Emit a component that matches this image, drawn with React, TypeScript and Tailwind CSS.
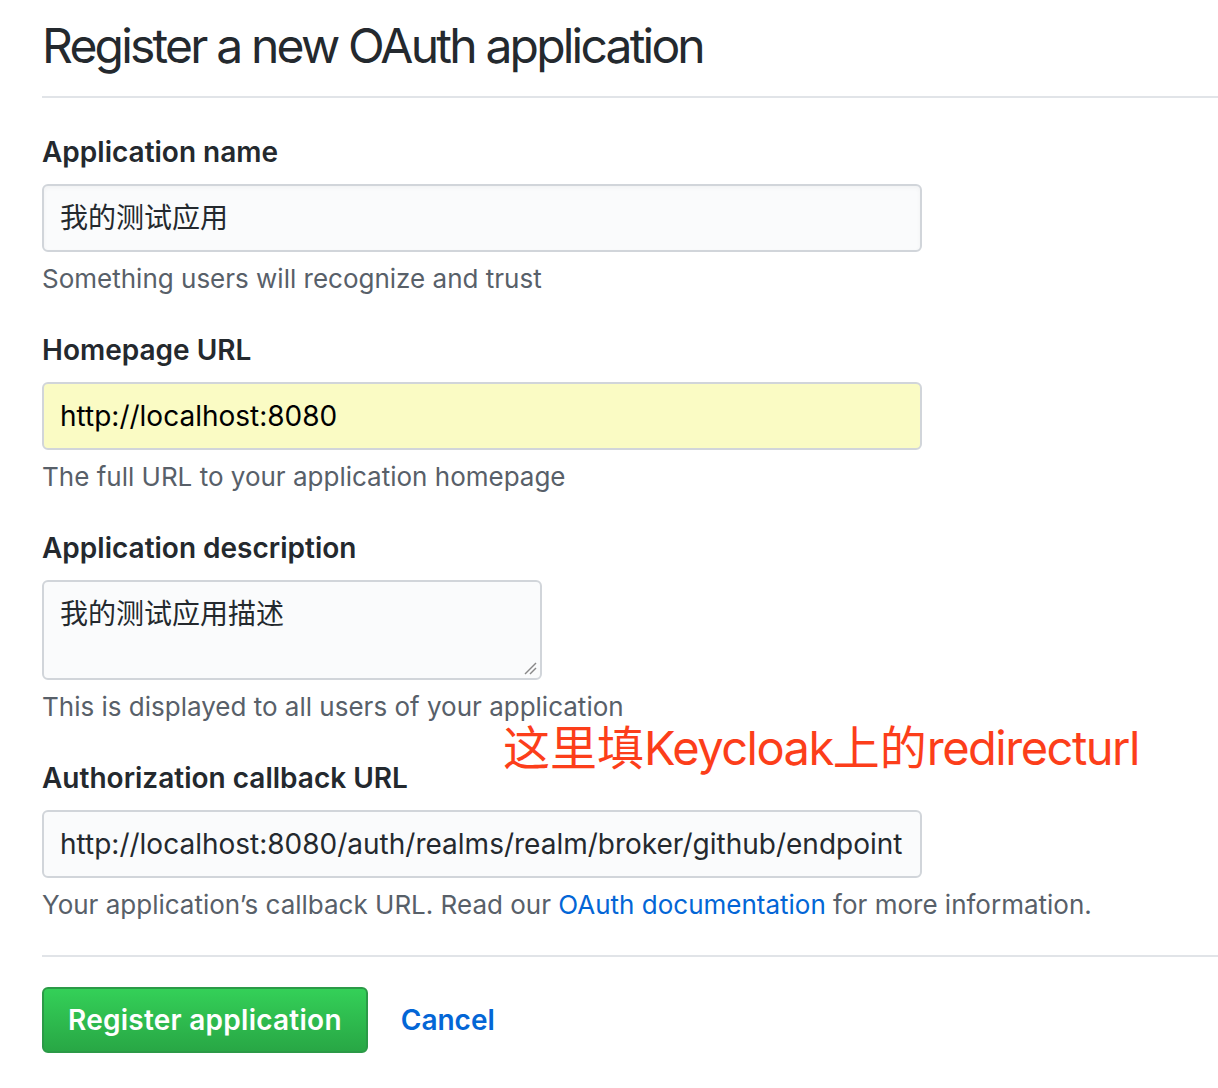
import React from "react";

const font = "Inter, 'Noto Sans CJK SC', sans-serif";

function Label({ children }: { children: React.ReactNode }) {
  return (
    <div className="text-[28px] leading-[40px] font-semibold text-[#24292e]">{children}</div>
  );
}

function Note({ children }: { children: React.ReactNode }) {
  return <div className="mt-[9px] text-[26px] leading-[36px] text-[#586069]">{children}</div>;
}

export default function App() {
  return (
    <div className="relative w-[1218px] h-[1088px] bg-white overflow-hidden" style={{ fontFamily: font }}>
      <div className="pl-[42px]">
        <h2 className="pt-[16px] pb-[20px] text-[48px] leading-[60px] font-normal text-[#24292e] tracking-[-2.8px]">
          Register a new OAuth application
        </h2>
        <div className="h-[2px] bg-[#e1e4e8]" />

        <div className="mt-[34px]">
          <Label>Application name</Label>
          <div className="mt-[12px] w-[880px] h-[68px] rounded-[6px] border-2 border-[#d1d5da] bg-[#fafbfc] px-[16px] flex items-center text-[28px] text-[#24292e] shadow-[inset_0_2px_4px_rgba(27,31,35,0.04)]">
            我的测试应用
          </div>
          <Note>Something users will recognize and trust</Note>
        </div>

        <div className="mt-[33px]">
          <Label>Homepage URL</Label>
          <div className="mt-[12px] w-[880px] h-[68px] rounded-[6px] border-2 border-[#d1d5da] bg-[#fafbc4] px-[16px] flex items-center text-[28px] text-black">
            http://localhost:8080
          </div>
          <Note>The full URL to your application homepage</Note>
        </div>

        <div className="mt-[33px]">
          <Label>Application description</Label>
          <div className="relative mt-[12px] w-[500px] h-[100px] rounded-[6px] border-2 border-[#d1d5da] bg-[#fafbfc] px-[16px] pt-[12px] text-[28px] leading-[40px] text-[#24292e]">
            我的测试应用描述
            <svg className="absolute right-[3px] bottom-[3px]" width="14" height="14" viewBox="0 0 14 14">
              <line x1="13" y1="2" x2="2" y2="13" stroke="#888" strokeWidth="1.5" />
              <line x1="13" y1="7" x2="7" y2="13" stroke="#888" strokeWidth="1.5" />
            </svg>
          </div>
          <Note>This is displayed to all users of your application</Note>
        </div>

        <div className="mt-[33px]">
          <Label>Authorization callback URL</Label>
          <div className="mt-[12px] w-[880px] h-[68px] rounded-[6px] border-2 border-[#d1d5da] bg-[#fafbfc] px-[16px] flex items-center text-[28px] text-[#24292e] whitespace-nowrap overflow-hidden">
            http://localhost:8080/auth/realms/realm/broker/github/endpoint
          </div>
          <Note>
            Your application’s callback URL. Read our{" "}
            <span className="text-[#0366d6]">OAuth documentation</span> for more information.
          </Note>
        </div>

        <div className="mt-[32px] h-[2px] bg-[#e1e4e8]" />

        <div className="mt-[30px] flex items-center">
          <button className="h-[66px] px-[24px] rounded-[6px] border-2 border-[#2b9a47] bg-gradient-to-b from-[#34d058] to-[#28a745] text-white text-[28px] font-semibold tracking-[0.25px]">
            Register application
          </button>
          <span className="ml-[33px] text-[28px] font-semibold text-[#0366d6]">Cancel</span>
        </div>
      </div>

      <div className="absolute left-[503px] top-[720px] text-[47px] leading-[56px] text-[#fc3e1a] whitespace-nowrap">
        这里填<span className="tracking-[-1.5px]">Keycloak</span>上的<span className="tracking-[-1.5px]">redirecturl</span>
      </div>
    </div>
  );
}
